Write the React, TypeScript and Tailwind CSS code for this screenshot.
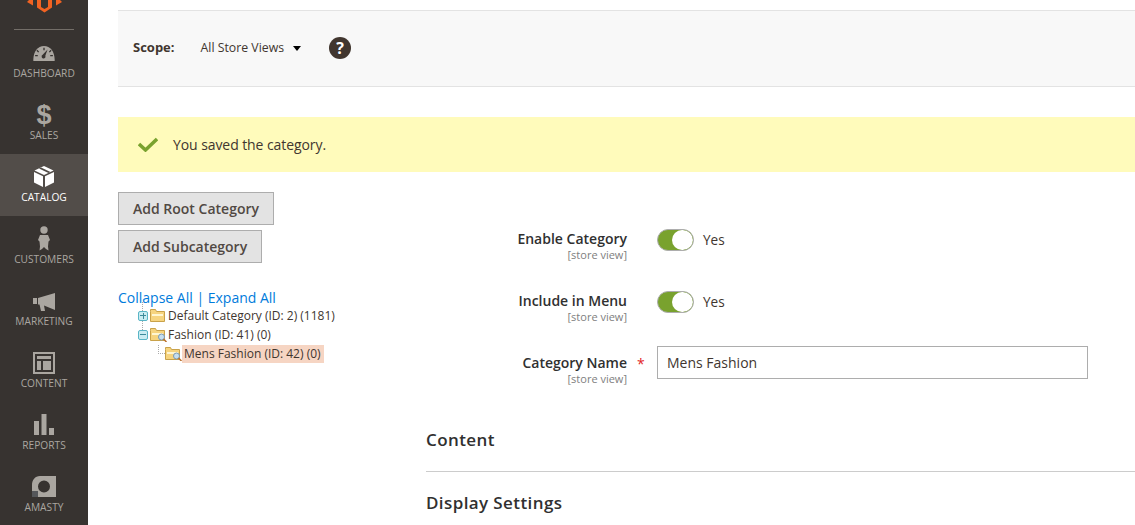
import React from "react";

const font = "font-['Open_Sans',sans-serif]";

const MagentoLogo = () => (
  <svg width="35" height="13" viewBox="0 0 35 13" className="block">
    <path d="M0 2l2-2h4v5.500z" fill="#f26322" />
    <path d="M29 5.500V0h4l2 2z" fill="#f26322" />
    <path d="M10 0h4v7l3.500 2L21 7V0h4v7.500L17.500 12.500 10 7.500z" fill="#f26322" />
  </svg>
);

const GaugeIcon = () => (
  <svg width="22" height="16" viewBox="0 0 24 18">
    <path d="M0 17C0 7 5 1 12 1s12 6 12 16v1H0z" fill="#aaa6a0" />
    <path d="M4 6l2 2M12 3v3M20 6l-2 2M2 12h3M19 12h3" stroke="#373330" strokeWidth="1.500" />
    <path d="M16 5L13.500 12a2.200 2.200 0 1 1-3-1z" fill="#373330" />
  </svg>
);

const DollarIcon = () => (
  <span className="mt-[1px] text-[27px] leading-[24px] font-bold text-[#aaa6a0] font-['Liberation_Sans',sans-serif]">$</span>
);

const BoxIcon = () => (
  <svg width="20" height="21" viewBox="0 0 20 21">
    <path d="M10 0l9.500 4.500L10 9 .5 4.500z" fill="#fff" />
    <path d="M5 2.500l9.500 4.500 2-1L7 1.500z" fill="#514c47" />
    <path d="M0 6l9 4.200V21L0 16.500zM20 6l-9 4.200V21l9-4.500z" fill="#fff" />
  </svg>
);

const PersonIcon = () => (
  <svg width="12" height="25" viewBox="0 0 12 25">
    <circle cx="6" cy="4" r="3.700" fill="#aaa6a0" />
    <path d="M2 9h8l2 5-1.500 1.500-.5 5 .5 4-2.500-1.500L6 21 4 23l-2.500 1.500.5-4-.5-5L0 14z" fill="#aaa6a0" />
  </svg>
);

const MegaphoneIcon = () => (
  <svg width="22" height="18" viewBox="0 0 22 18" className="mt-[2px]">
    <path d="M0 5h4v6H0z" fill="#aaa6a0" />
    <path d="M5 5L22 0v17L11 12.500 12 18H8L6.500 11.500H5z" fill="#aaa6a0" />
  </svg>
);

const ContentIcon = () => (
  <svg width="22" height="22" viewBox="0 0 22 22">
    <path d="M0 0h22v22H0zM2 2v18h18V2z" fill="#aaa6a0" fillRule="evenodd" />
    <path d="M4 4h14v3H4zM4 9h4v9H4zM10 9h8v9h-8z" fill="#aaa6a0" />
  </svg>
);

const BarsIcon = () => (
  <svg width="20" height="21" viewBox="0 0 20 21">
    <path d="M0 7h5v14H0zM7.500 0h5v21h-5zM15 14h5v7h-5z" fill="#aaa6a0" />
  </svg>
);

const AmastyIcon = () => (
  <svg width="24" height="23" viewBox="0 0 24 23" className="-mt-[1px]">
    <path d="M8 1h16v21H0V10C0 5 3 1 8 1zm4 4.500a6 6 0 1 0 0 12 6 6 0 0 0 0-12z" fill="#aaa6a0" fillRule="evenodd" />
    <path d="M0 16h6v6H0z" fill="#55575a" />
  </svg>
);

const menu = [
  { label: "DASHBOARD", icon: <GaugeIcon /> },
  { label: "SALES", icon: <DollarIcon /> },
  { label: "CATALOG", icon: <BoxIcon />, active: true },
  { label: "CUSTOMERS", icon: <PersonIcon /> },
  { label: "MARKETING", icon: <MegaphoneIcon /> },
  { label: "CONTENT", icon: <ContentIcon /> },
  { label: "REPORTS", icon: <BarsIcon /> },
  { label: "AMASTY", icon: <AmastyIcon /> },
];

const Sidebar = () => (
  <aside className="w-[88px] h-[525px] shrink-0 bg-[#373330] overflow-hidden">
    <div className="h-[29px] flex justify-center">
      <MagentoLogo />
    </div>
    <div className="mx-[14px] h-px bg-[#736e68]" />
    {menu.map((item) => (
      <div
        key={item.label}
        className={`h-[62px] flex flex-col items-center justify-end pb-[12px] ${item.active ? "bg-[#524d49] text-white" : "text-[#aaa6a0]"}`}
      >
        <div className="h-[26px] pt-[3px] flex items-center justify-center">{item.icon}</div>
        <div className="mt-[2px] text-[10.200px] leading-[14px]">{item.label}</div>
      </div>
    ))}
  </aside>
);

const Toggle = () => (
  <div className="flex items-center gap-[9px]">
    <div className="w-[37px] h-[22px] rounded-full bg-[#79a22e] border border-[#adadad] flex justify-end overflow-hidden">
      <div className="w-[21px] h-[20px] rounded-full bg-white" />
    </div>
    <span className="text-[13.600px] text-[#41362f]">Yes</span>
  </div>
);

const Label = ({ text, required }: { text: string; required?: boolean }) => (
  <div className="relative w-[201px] text-right">
    <div className="text-sm leading-[19px] font-semibold text-[#303030]">{text}</div>
    <div className="text-[11px] leading-[13px] text-[#808080]">[store view]</div>
    {required && <span className="absolute left-[211px] top-[1px] text-sm text-[#e22626]">*</span>}
  </div>
);

const Folder = ({ search }: { search?: boolean }) => (
  <svg width="17" height="15" viewBox="0 0 17 15" className="shrink-0">
    <path d="M.5 3.500v-2h5l1 2h8v10H.5z" fill="#f6d47f" stroke="#c9a24a" />
    <path d="M2 6h11v2H2z" fill="#fff6d2" />
    {search && (
      <>
        <circle cx="11.500" cy="10" r="3" fill="#c6dff0" stroke="#7a99b3" />
        <path d="M13.500 12l3 3" stroke="#b86f2a" strokeWidth="1.500" />
      </>
    )}
  </svg>
);

const Expander = ({ open }: { open?: boolean }) => (
  <span className="w-[10px] h-[10px] rounded-[2px] border border-[#59b5c6] bg-[#c9ecf2] flex items-center justify-center relative shrink-0">
    <span className="w-[6px] h-px bg-[#3c8a9a]" />
    {!open && <span className="absolute w-px h-[6px] bg-[#3c8a9a]" />}
    <span className="absolute left-[3px] -top-[10px] h-[9px] border-l border-dotted border-[#aaa]" />
  </span>
);

const Tree = () => (
  <div className="mt-[26px] text-[12px] text-[#41362f]">
    <div className="h-[17px] text-sm leading-[18px] text-[#007bdb]">Collapse All | Expand All</div>
    <div className="flex items-center h-[19px] pl-[20px]">
      <Expander />
      <span className="ml-[2px]"><Folder /></span>
      <span className="ml-[1px]">Default Category (ID: 2) (1181)</span>
    </div>
    <div className="flex items-center h-[19px] pl-[20px]">
      <Expander open />
      <span className="ml-[2px]"><Folder search /></span>
      <span className="ml-[1px]">Fashion (ID: 41) (0)</span>
    </div>
    <div className="flex items-center h-[19px] pl-[40px]">
      <span className="relative w-[7px] border-t border-dotted border-[#aaa]">
        <span className="absolute left-0 -top-[9px] h-[9px] border-l border-dotted border-[#aaa]" />
      </span>
      <Folder search />
      <span className="bg-[#f6d5c3] pl-[2px] pr-[3px] leading-[18px]">Mens Fashion (ID: 42) (0)</span>
    </div>
  </div>
);

const App: React.FC = () => {
  return (
    <div className={`flex w-[1135px] h-[525px] overflow-hidden bg-white ${font}`}>
      <Sidebar />
      <main className="flex-1 pl-[30px] pt-[10px]">
        {/* Scope bar */}
        <div className="h-[77px] bg-[#f8f8f8] border-y border-[#e3e3e3] flex items-center pl-[15px] pb-[2px]">
          <span className="text-[13px] font-bold text-[#41362f]">Scope:</span>
          <span className="ml-[26px] mt-[1px] text-[12.300px] text-[#41362f]">All Store Views</span>
          <span className="ml-[9px] mt-[2px] border-x-[4px] border-x-transparent border-t-[5px] border-t-[#000]" />
          <span className="ml-[28px] w-[22px] h-[22px] rounded-full bg-[#41362f] text-white text-[16px] font-bold flex items-center justify-center">?</span>
        </div>

        {/* Message */}
        <div className="mt-[30px] h-[55px] bg-[#fffbbb] flex items-center pl-[20px] text-sm tracking-[-0.08px] text-[#41362f]">
          <svg width="20" height="15" viewBox="0 0 20 15">
            <path d="M1 7l6.500 6L19 2" fill="none" stroke="#79a22e" strokeWidth="3.500" />
          </svg>
          <span className="ml-[15px]">You saved the category.</span>
        </div>

        <div className="flex mt-[20px]">
          {/* Left column */}
          <div className="w-[308px] shrink-0">
            <div className="flex flex-col items-start gap-[5px]">
              <button className="h-[33px] px-[14px] bg-[#e3e3e3] border border-[#adadad] text-sm font-semibold text-[#514943]">Add Root Category</button>
              <button className="h-[33px] px-[14px] bg-[#e3e3e3] border border-[#adadad] text-sm font-semibold text-[#514943]">Add Subcategory</button>
            </div>
            <Tree />
          </div>

          {/* Form */}
          <div className="flex-1 pt-[37px]">
            <div className="flex items-start">
              <Label text="Enable Category" />
              <div className="ml-[30px]"><Toggle /></div>
            </div>
            <div className="flex items-start mt-[30px]">
              <Label text="Include in Menu" />
              <div className="ml-[30px]"><Toggle /></div>
            </div>
            <div className="flex items-start mt-[30px]">
              <Label text="Category Name" required />
              <div className="ml-[30px] w-[431px] h-[33px] -mt-[7px] border border-[#adadad] flex items-center px-[9px] text-sm text-[#41362f]">Mens Fashion</div>
            </div>
            <div className="mt-[44px] h-[43px] border-b border-[#cccccc] text-[17px] leading-[22px] font-semibold text-[#303030] tracking-[0.4px]">Content</div>
            <div className="mt-[20px] text-[17px] leading-[22px] font-semibold text-[#303030] tracking-[0.4px]">Display Settings</div>
          </div>
        </div>
      </main>
    </div>
  );
};

export default App;
